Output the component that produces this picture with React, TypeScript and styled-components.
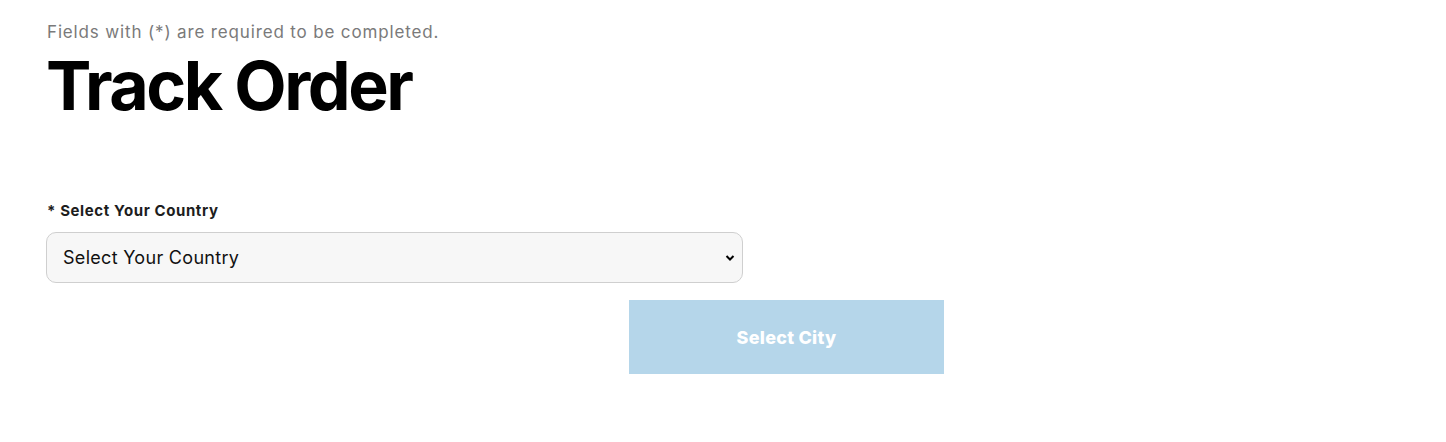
import React from "react";
import styled, { createGlobalStyle } from "styled-components";

const Global = createGlobalStyle`
  html, body { margin: 0; padding: 0; background: #fff; }
  body { font-family: "Inter", "Open Sans", sans-serif; }
`;

const Page = styled.main`
  padding: 20px 0 0 46px;
  display: flex;
  flex-direction: column;
`;

const Note = styled.p`
  margin: 0 0 0 1px;
  font-family: "Inter", sans-serif;
  font-size: 17px;
  line-height: 24px;
  color: #7a7a7a;
  letter-spacing: 0.85px;
`;

const Title = styled.h1`
  margin: 7px 0 0 0;
  font-family: "Inter", sans-serif;
  font-weight: 700;
  font-size: 68px;
  line-height: 68px;
  letter-spacing: -2.5px;
  color: #000;
`;

const Field = styled.div`
  margin-top: 83px;
  display: flex;
  flex-direction: column;
  gap: 12px;
  width: 697px;
`;

const Label = styled.label`
  margin-left: 1px;
  font-family: "Inter", sans-serif;
  font-weight: 700;
  font-size: 15px;
  line-height: 18px;
  color: #1d1d1d;
  letter-spacing: 0.6px;
`;

const SelectWrap = styled.div`
  position: relative;
`;

const Select = styled.select`
  appearance: none;
  width: 100%;
  height: 51px;
  box-sizing: border-box;
  padding: 0 16px;
  border: 1px solid #cfcfcf;
  border-radius: 10px;
  background: #f7f7f7;
  font-family: "Inter", sans-serif;
  font-size: 18px;
  letter-spacing: 0.3px;
  color: #111;
  outline: none;
`;

const Chevron = styled.svg`
  position: absolute;
  right: 8px;
  top: 22px;
  pointer-events: none;
`;

const Button = styled.button`
  margin: 17px 0 0 583px;
  width: 315px;
  height: 74px;
  border: none;
  background: #b5d6ea;
  color: #fff;
  font-family: "Inter", sans-serif;
  font-weight: 800;
  font-size: 18px;
  letter-spacing: 0.25px;
  cursor: not-allowed;
`;

export default function App() {
  return (
    <>
      <Global />
      <Page>
        <Note>Fields with (*) are required to be completed.</Note>
        <Title>Track Order</Title>
        <Field>
          <Label htmlFor="country">* Select Your Country</Label>
          <SelectWrap>
            <Select id="country" defaultValue="">
              <option value="">Select Your Country</option>
            </Select>
            <Chevron width="10" height="8" viewBox="0 0 10 8">
              <path d="M1.5 2 L5 5.5 L8.5 2" fill="none" stroke="#000" strokeWidth="2" />
            </Chevron>
          </SelectWrap>
        </Field>
        <Button disabled>Select City</Button>
      </Page>
    </>
  );
}
